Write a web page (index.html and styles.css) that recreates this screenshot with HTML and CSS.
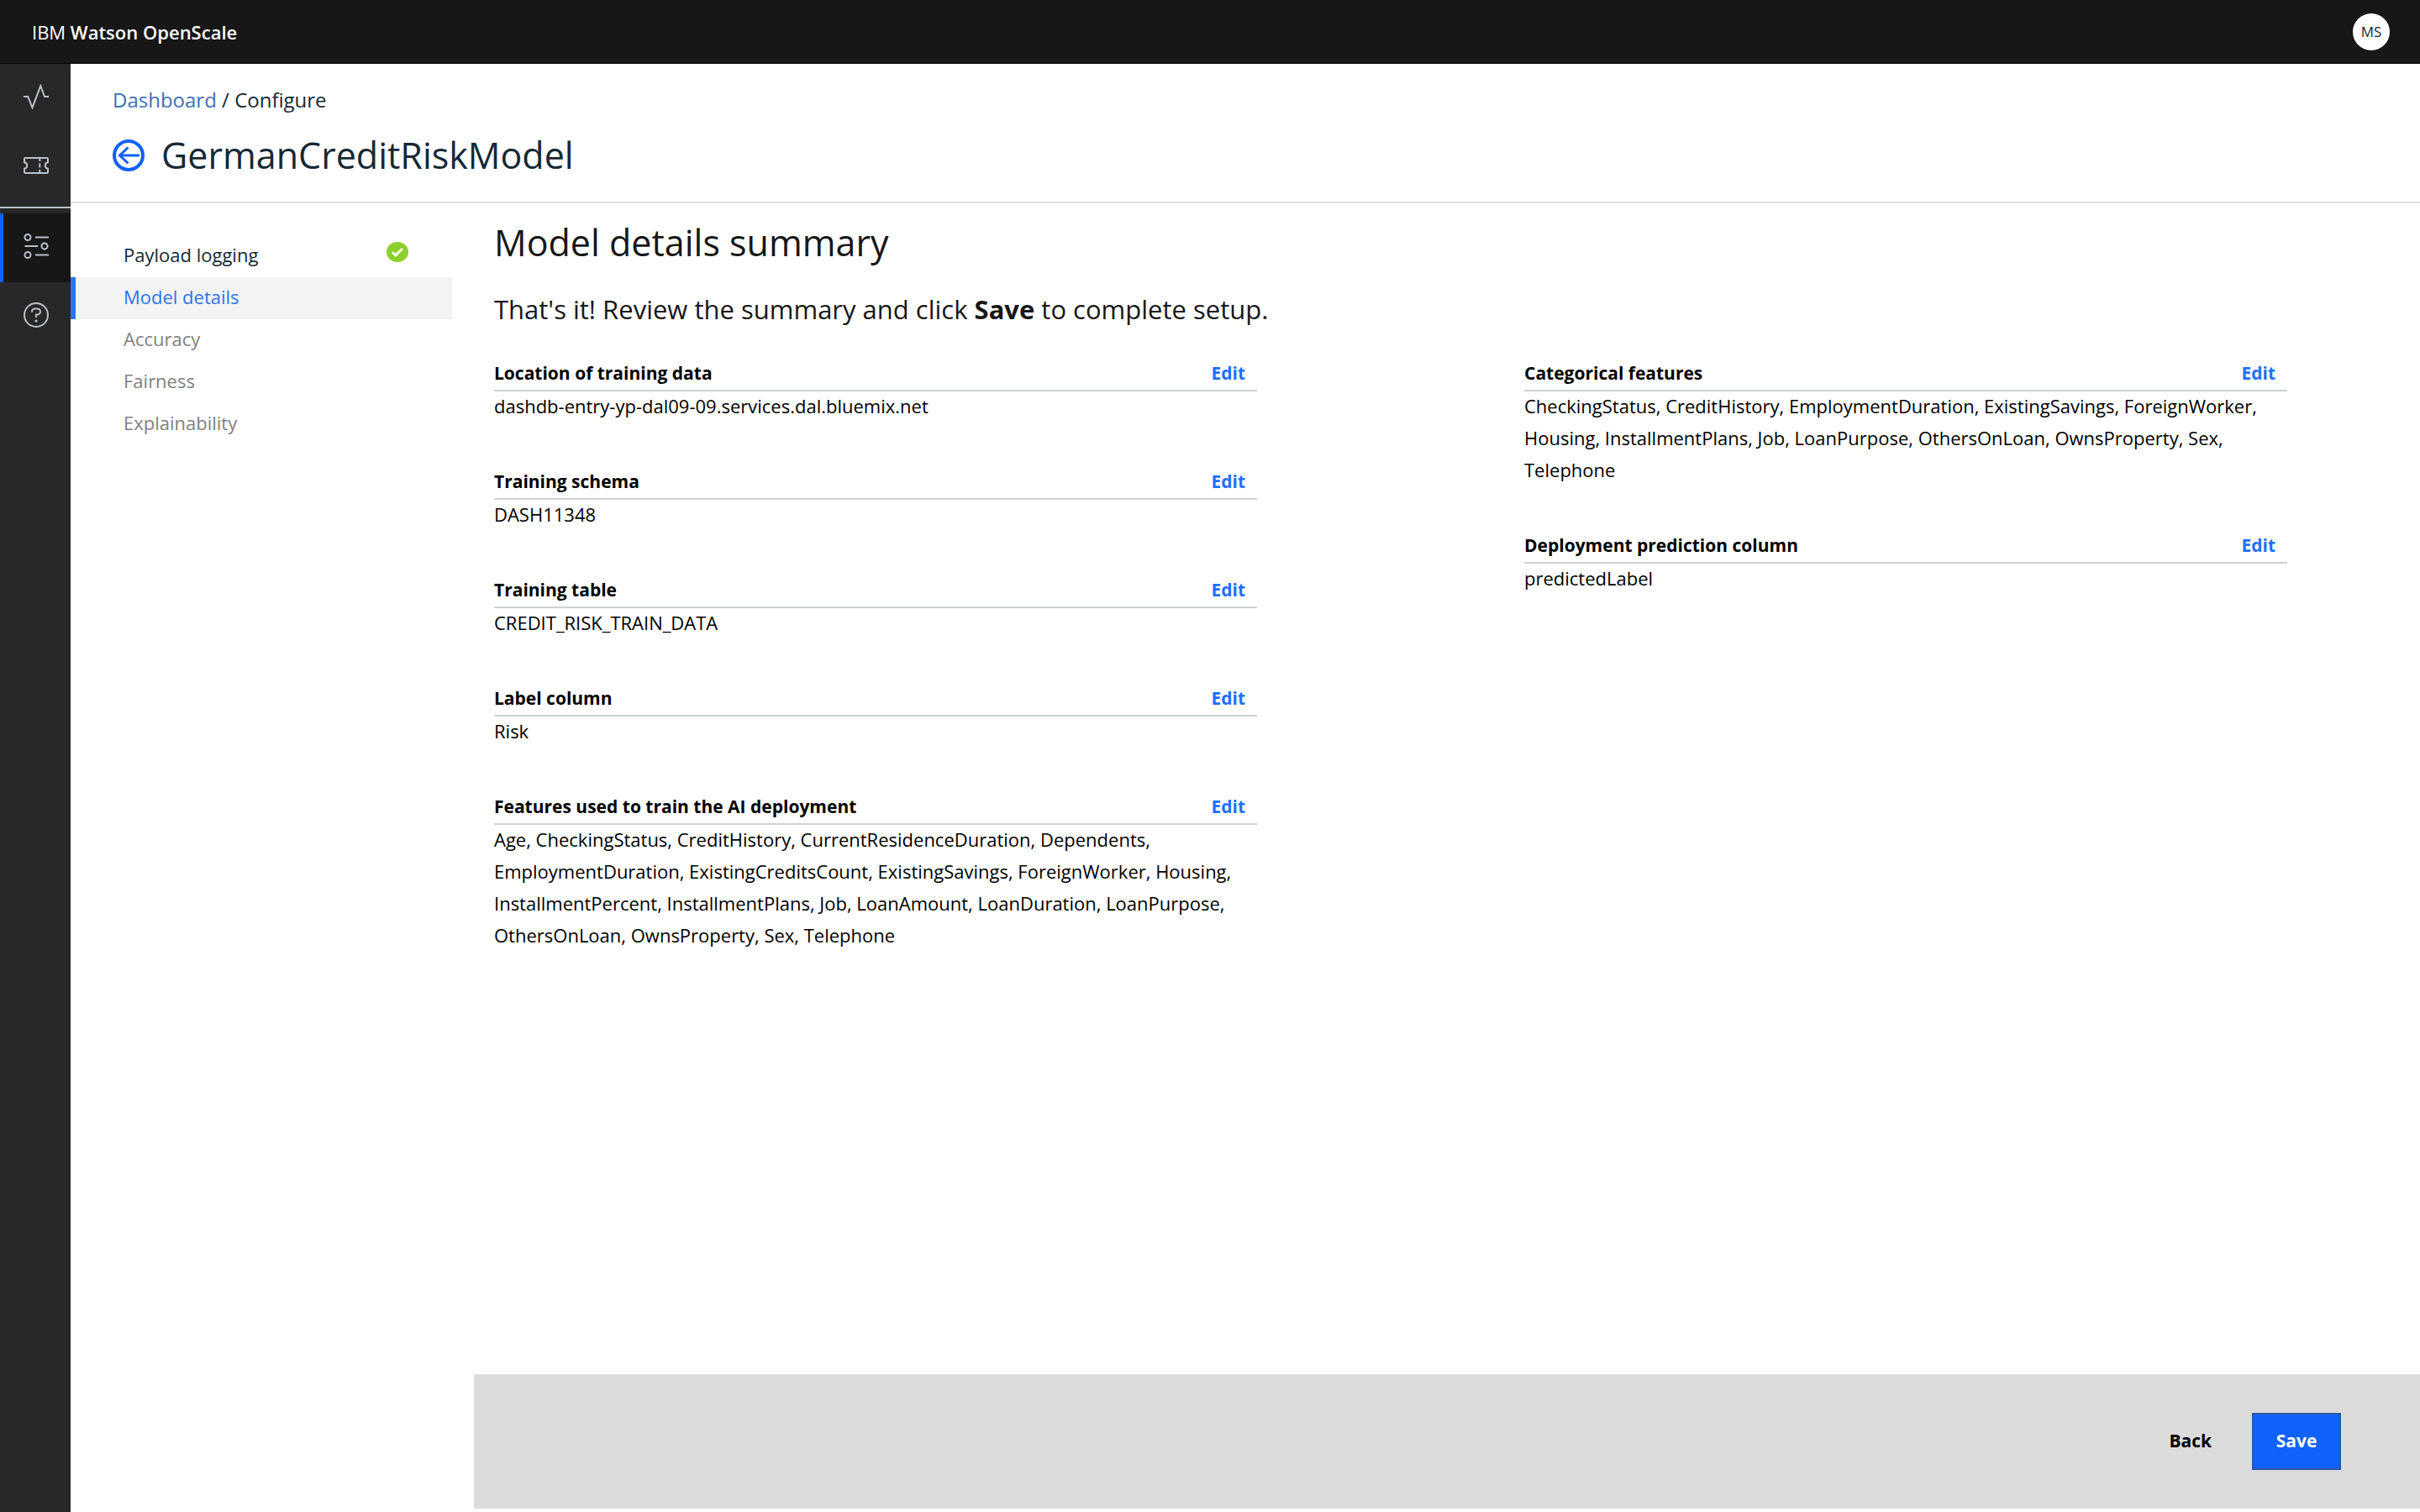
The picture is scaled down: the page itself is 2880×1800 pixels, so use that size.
FILE: index.html
```html
<!DOCTYPE html>
<html lang="en">
<head>
  <meta charset="utf-8">
  <meta name="viewport" content="width=device-width, initial-scale=1">
  <title>IBM Watson OpenScale</title>
  <link rel="stylesheet" href="styles.css">
</head>
<body>
  <header class="topbar">
    <span class="brand">IBM <b>Watson OpenScale</b></span>
    <button class="avatar" type="button">MS</button>
  </header>

  <div class="shell">
    <nav class="rail" aria-label="Main">
      <a class="rail-item" href="#" aria-label="Insights">
        <svg class="rail-icon" viewBox="0 0 30 30"><path d="M0 15h5.200l5.300 13.200L20.300 2.200 25 15h5"/></svg>
      </a>
      <a class="rail-item" href="#" aria-label="Tickets">
        <svg class="rail-icon" viewBox="0 0 30 30"><path d="M2 6h26a1 1 0 0 1 1 1v4.200c-2 .3-3.200 2-3.200 3.800s1.200 3.500 3.200 3.800V23a1 1 0 0 1-1 1H2a1 1 0 0 1-1-1v-4.200c2-.3 3.200-2 3.200-3.800S3 11.500 1 11.200V7a1 1 0 0 1 1-1zM19.300 6v4M19.300 12.500v5M19.300 20v4"/></svg>
      </a>
      <div class="rail-divider"></div>
      <a class="rail-item rail-item-active" href="#" aria-label="Configure">
        <svg class="rail-icon" viewBox="0 0 30 30"><circle cx="5" cy="4.500" r="3.500"/><circle cx="25" cy="15" r="3.500"/><circle cx="5" cy="25.500" r="3.500"/><path d="M14 4.500h16M1.500 15H17M14 25.500h16"/></svg>
      </a>
      <a class="rail-item" href="#" aria-label="Help">
        <svg class="rail-icon" viewBox="0 0 30 30"><circle cx="15" cy="15" r="14"/><path d="M10 11.800V11c0-2 1.600-3.500 3.600-3.500h2.800c2 0 3.600 1.500 3.600 3.500s-1.600 3.500-3.600 3.500H15V18"/><circle class="dot" cx="15" cy="22" r="1.600"/></svg>
      </a>
    </nav>

    <div class="page">
      <div class="page-head">
        <div class="crumbs"><a href="#">Dashboard</a> / Configure</div>
        <div class="title-row">
          <a class="back-link" href="#" aria-label="Back to dashboard">
            <svg class="back-icon" viewBox="0 0 38 38"><circle cx="19" cy="19" r="17"/><path d="M32 19H8.500M18.500 9.500 8.500 19l10 9.500"/></svg>
          </a>
          <h1>GermanCreditRiskModel</h1>
        </div>
      </div>

      <div class="columns">
        <nav class="steps" aria-label="Configuration steps">
          <a class="step step-done" href="#">Payload logging
            <svg class="check" viewBox="0 0 26 24"><ellipse cx="13" cy="12" rx="13" ry="12"/><path d="M7 12.300l3.700 3.700L19 8"/></svg>
          </a>
          <a class="step step-current" href="#" aria-current="step">Model details</a>
          <a class="step" href="#">Accuracy</a>
          <a class="step" href="#">Fairness</a>
          <a class="step" href="#">Explainability</a>
        </nav>

        <main class="main">
          <div class="content">
            <h2>Model details summary</h2>
            <p class="intro">That's it! Review the summary and click <b>Save</b> to complete setup.</p>
            <div class="summary">
              <div class="summary-col">
                <section class="field">
                  <div class="field-head"><h3>Location of training data</h3><button class="edit" type="button">Edit</button></div>
                  <p class="value">dashdb-entry-yp-dal09-09.services.dal.bluemix.net</p>
                </section>
                <section class="field">
                  <div class="field-head"><h3>Training schema</h3><button class="edit" type="button">Edit</button></div>
                  <p class="value">DASH11348</p>
                </section>
                <section class="field">
                  <div class="field-head"><h3>Training table</h3><button class="edit" type="button">Edit</button></div>
                  <p class="value">CREDIT_RISK_TRAIN_DATA</p>
                </section>
                <section class="field">
                  <div class="field-head"><h3>Label column</h3><button class="edit" type="button">Edit</button></div>
                  <p class="value">Risk</p>
                </section>
                <section class="field">
                  <div class="field-head"><h3>Features used to train the AI deployment</h3><button class="edit" type="button">Edit</button></div>
                  <p class="value">Age, CheckingStatus, CreditHistory, CurrentResidenceDuration, Dependents, EmploymentDuration, ExistingCreditsCount, ExistingSavings, ForeignWorker, Housing, InstallmentPercent, InstallmentPlans, Job, LoanAmount, LoanDuration, LoanPurpose, OthersOnLoan, OwnsProperty, Sex, Telephone</p>
                </section>
              </div>
              <div class="summary-col">
                <section class="field">
                  <div class="field-head"><h3>Categorical features</h3><button class="edit" type="button">Edit</button></div>
                  <p class="value">CheckingStatus, CreditHistory, EmploymentDuration, ExistingSavings, ForeignWorker, Housing, InstallmentPlans, Job, LoanPurpose, OthersOnLoan, OwnsProperty, Sex, Telephone</p>
                </section>
                <section class="field">
                  <div class="field-head"><h3>Deployment prediction column</h3><button class="edit" type="button">Edit</button></div>
                  <p class="value">predictedLabel</p>
                </section>
              </div>
            </div>
          </div>
          <footer class="actions">
            <button class="btn btn-plain" type="button">Back</button>
            <button class="btn btn-primary" type="button">Save</button>
          </footer>
        </main>
      </div>
    </div>
  </div>
</body>
</html>
```
FILE: styles.css
```css
*,
*::before,
*::after {
  box-sizing: border-box;
}

body {
  margin: 0;
  min-height: 100vh;
  display: flex;
  flex-direction: column;
  background: #fff;
  color: #000;
  font: 22px/38px "Open Sans", "Noto Sans", sans-serif;
}

h1, h2, h3, p {
  margin: 0;
}

a {
  color: inherit;
  text-decoration: none;
}

button {
  margin: 0;
  padding: 0;
  border: 0;
  background: none;
  color: inherit;
  font: inherit;
  cursor: pointer;
}

b {
  font-weight: 600;
}

/* Top bar */
.topbar {
  display: flex;
  align-items: center;
  justify-content: space-between;
  height: 76px;
  padding: 0 36px 0 38px;
  border-bottom: 1px solid #0d090d;
  background: #171717;
  color: #fff;
}

.avatar {
  width: 44px;
  height: 44px;
  border-radius: 50%;
  background: #fff;
  color: #152935;
  font-size: 17px;
  line-height: 44px;
}

.shell {
  flex: 1;
  display: flex;
}

/* Icon rail */
.rail {
  flex: none;
  width: 84px;
  background: #282828;
}

.rail-item {
  display: flex;
  justify-content: center;
  height: 82px;
  padding-top: 24px;
  border-left: 4px solid transparent;
  border-right: 2px solid transparent;
}

.rail-item-active {
  background: #171717;
  border-left-color: #0f62fe;
  border-right-color: #171717;
}

.rail-divider {
  height: 2px;
  margin: 6px 0;
  background: #b8c1cb;
}

.rail-icon {
  width: 30px;
  height: 30px;
  fill: none;
  stroke: #b8c1cb;
  stroke-width: 2;
}

.rail-icon .dot {
  fill: #b8c1cb;
  stroke: none;
}

/* Page heading */
.page {
  flex: 1;
  min-width: 0;
  display: flex;
  flex-direction: column;
}

.page-head {
  padding: 24px 50px 26px;
  border-bottom: 2px solid #dfdfdf;
  color: #152935;
}

.crumbs {
  font-size: 24px;
}

.crumbs a {
  color: #3d70b2;
}

.title-row {
  display: flex;
  align-items: center;
  gap: 20px;
  margin-top: 18px;
}

.back-link,
.back-icon {
  display: block;
  width: 38px;
  height: 38px;
}

.back-icon {
  fill: none;
  stroke: #0f62fe;
  stroke-width: 4;
}

.back-icon path {
  stroke-width: 3;
}

h1, h2 {
  font-size: 43px;
  font-weight: 400;
  line-height: 58px;
}

/* Configuration steps */
.columns {
  flex: 1;
  display: flex;
}

.steps {
  flex: none;
  width: 454px;
  padding-top: 38px;
}

.step {
  display: flex;
  justify-content: space-between;
  height: 50px;
  padding: 0 52px 0 57px;
  border-left: 6px solid transparent;
  color: #808080;
  line-height: 46px;
}

.step-done {
  color: #152935;
}

.step-current {
  border-left-color: #2d74eb;
  background: #f3f3f3;
  color: #2d74eb;
}

.check {
  width: 26px;
  height: 24px;
  margin-top: 8px;
  fill: #8cd02c;
}

.check path {
  fill: none;
  stroke: #fff;
  stroke-width: 3;
}

/* Summary */
.main {
  flex: 1;
  min-width: 0;
  display: flex;
  flex-direction: column;
  justify-content: space-between;
  margin-left: 26px;
  padding-bottom: 4px;
}

.content {
  padding: 18px 158px 0 24px;
}

h2,
.intro {
  color: #171717;
}

.intro {
  margin-top: 26px;
  font-size: 31px;
  line-height: 48px;
}

.intro b {
  font-weight: 700;
}

.summary {
  display: grid;
  grid-template-columns: 1fr 1fr;
  gap: 318px;
  margin-top: 34px;
}

.summary-col {
  display: flex;
  flex-direction: column;
  gap: 53px;
}

.field-head {
  display: flex;
  justify-content: space-between;
  padding: 0 14px 2px 0;
  border-bottom: 2px solid #cdd1d4;
  line-height: 36px;
}

h3,
.edit {
  font-size: 21px;
  font-weight: 700;
}

.edit {
  color: #1f70ff;
}

.value {
  margin-top: -2px;
}

/* Footer actions */
.actions {
  display: flex;
  align-items: center;
  justify-content: flex-end;
  gap: 20px;
  height: 160px;
  padding-right: 94px;
  background: #dcdcdc;
}

.btn {
  height: 68px;
  padding: 0 28px 2px;
  font-size: 21px;
  font-weight: 700;
}

.btn-primary {
  min-width: 106px;
  padding: 0 24px 2px;
  border: 2px solid #2d5a9c;
  background: #0f62fe;
  color: #fff;
}
```
